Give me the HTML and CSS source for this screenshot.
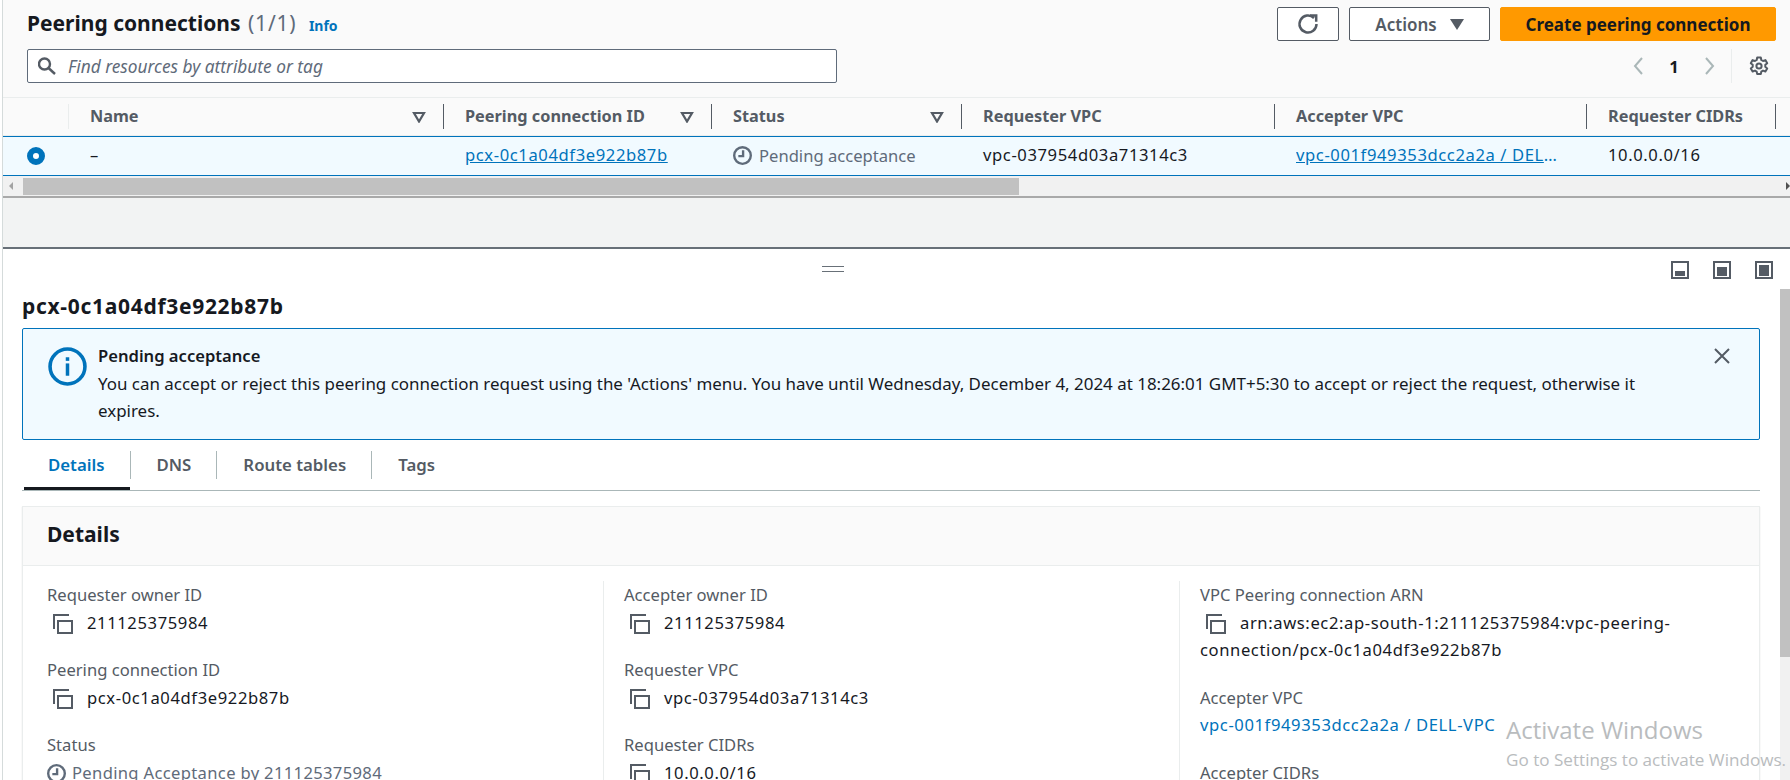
FILE: index.html
```html
<!DOCTYPE html>
<html lang="en">
<head>
    <meta charset="UTF-8">
    <title>Peering connections</title>
    <link rel="stylesheet" href="styles.css">
</head>
<body>
    <svg class="sprites" width="0" height="0">
        <symbol id="i-copy" viewBox="0 0 20 20">
            <path d="M1 15V1h15" fill="none" stroke="currentColor" stroke-width="2"/>
            <rect x="5" y="7" width="14" height="12" fill="none" stroke="currentColor" stroke-width="2"/>
        </symbol>
        <symbol id="i-clock" viewBox="0 0 16 16">
            <circle cx="8" cy="8" r="7" fill="none" stroke="currentColor" stroke-width="2"/>
            <path d="M8.500 3.500v5H4.500" fill="none" stroke="currentColor" stroke-width="2"/>
        </symbol>
        <symbol id="i-filter" viewBox="0 0 14 12">
            <path d="M2 2h10L7 10.500z" fill="none" stroke="currentColor" stroke-width="2.200"/>
        </symbol>
    </svg>

    <div class="app">
        <section class="list-panel">
            <div class="list-top">
                <div class="list-left">
                    <h1 class="list-title">Peering connections <span class="count">(1/1)</span> <a class="info">Info</a></h1>
                    <div class="search">
                        <svg class="search-icon" viewBox="0 0 18 18"><circle cx="6.500" cy="7" r="5.500" fill="none" stroke="currentColor" stroke-width="2.400"/><path d="M10.500 11l6.500 6" stroke="currentColor" stroke-width="2.400"/></svg>
                        <span class="search-text">Find resources by attribute or tag</span>
                    </div>
                </div>
                <div class="list-right">
                    <div class="btn-row">
                        <button class="btn btn-icon">
                            <svg width="22" height="22" viewBox="0 0 22 22"><path d="M17 5A8.500 8.500 0 1 0 19.500 11" fill="none" stroke="currentColor" stroke-width="2.500"/><path d="M13 2.500h6.200v6.200" fill="none" stroke="currentColor" stroke-width="2.500"/></svg>
                        </button>
                        <button class="btn btn-actions">Actions <span class="caret"></span></button>
                        <button class="btn btn-primary">Create peering connection</button>
                    </div>
                    <div class="pager">
                        <svg class="pager-arrow" viewBox="0 0 12 20"><path d="M10 2L3 10l7 8" fill="none" stroke="currentColor" stroke-width="2"/></svg>
                        <span class="pager-num">1</span>
                        <svg class="pager-arrow" viewBox="0 0 12 20"><path d="M2 2l7 8-7 8" fill="none" stroke="currentColor" stroke-width="2"/></svg>
                        <span class="pager-gear">
                            <svg width="20" height="20" viewBox="0 0 20 20"><path d="M8.200 1.500h3.600l.5 2.500 1.700 1 2.400-.9 1.800 3.100-1.900 1.600v2l1.900 1.600-1.800 3.100-2.400-.9-1.700 1-.5 2.500H8.200l-.5-2.500-1.700-1-2.400.9-1.800-3.100 1.900-1.600v-2L1.800 7.200l1.800-3.100 2.400.9 1.700-1z" fill="none" stroke="currentColor" stroke-width="2" stroke-linejoin="round"/><circle cx="10" cy="10" r="2.600" fill="none" stroke="currentColor" stroke-width="2"/></svg>
                        </span>
                    </div>
                </div>
            </div>

            <div class="t-row t-head">
                <div class="th th-select"></div>
                <div class="th th-soft">Name<svg class="filter"><use href="#i-filter"/></svg></div>
                <div class="th">Peering connection ID<svg class="filter"><use href="#i-filter"/></svg></div>
                <div class="th">Status<svg class="filter"><use href="#i-filter"/></svg></div>
                <div class="th">Requester VPC</div>
                <div class="th">Accepter VPC</div>
                <div class="th th-end">Requester CIDRs</div>
            </div>
            <div class="t-row t-selected">
                <div class="td td-radio"><span class="radio"></span></div>
                <div class="td">–</div>
                <div class="td"><a class="link id">pcx-0c1a04df3e922b87b</a></div>
                <div class="td td-status"><svg class="clock"><use href="#i-clock"/></svg>Pending acceptance</div>
                <div class="td id">vpc-037954d03a71314c3</div>
                <div class="td"><a class="link link-cut id">vpc-001f949353dcc2a2a / DELL-VPC</a></div>
                <div class="td id">10.0.0.0/16</div>
            </div>
            <div class="h-scroll">
                <span class="arrow-left"></span>
                <div class="h-thumb"></div>
                <span class="arrow-right"></span>
            </div>
            <div class="list-empty"></div>
        </section>

        <section class="split-panel">
            <div class="split-bar">
                <span class="handle"></span>
                <div class="view-icons">
                    <svg class="view-icon"><rect x="1" y="1" width="16" height="16" fill="none" stroke="currentColor" stroke-width="2"/><rect x="4" y="10" width="10" height="5" fill="currentColor"/></svg>
                    <svg class="view-icon"><rect x="1" y="1" width="16" height="16" fill="none" stroke="currentColor" stroke-width="2"/><rect x="4" y="6" width="10" height="9" fill="currentColor"/></svg>
                    <svg class="view-icon"><rect x="1" y="1" width="16" height="16" fill="none" stroke="currentColor" stroke-width="2"/><rect x="4" y="4" width="10" height="11" fill="currentColor"/></svg>
                </div>
            </div>

            <div class="detail">
                <h2 class="detail-title">pcx-0c1a04df3e922b87b</h2>

                <div class="alert">
                    <svg class="alert-icon" viewBox="0 0 38 38"><circle cx="19" cy="19" r="17" fill="none" stroke="currentColor" stroke-width="3.500"/><rect x="17.300" y="16" width="3.400" height="12" fill="currentColor"/><rect x="17.300" y="10" width="3.400" height="3.500" fill="currentColor"/></svg>
                    <div class="alert-body">
                        <div class="alert-title">Pending acceptance</div>
                        <div class="alert-text">You can accept or reject this peering connection request using the 'Actions' menu. You have until Wednesday, December 4, 2024 at 18:26:01 GMT+5:30 to accept or reject the request, otherwise it expires.</div>
                    </div>
                    <svg class="alert-close" viewBox="0 0 18 18"><path d="M2 2l14 14M16 2L2 16" stroke="currentColor" stroke-width="2"/></svg>
                </div>

                <div class="tabs">
                    <div class="tab tab-active">Details</div>
                    <div class="tab">DNS</div>
                    <div class="tab">Route tables</div>
                    <div class="tab tab-last">Tags</div>
                </div>

                <div class="card">
                    <div class="card-head">Details</div>
                    <div class="card-cols">
                        <div class="col">
                            <div class="field">
                                <div class="label">Requester owner ID</div>
                                <div class="value id"><svg class="copy"><use href="#i-copy"/></svg>211125375984</div>
                            </div>
                            <div class="field">
                                <div class="label">Peering connection ID</div>
                                <div class="value id"><svg class="copy"><use href="#i-copy"/></svg>pcx-0c1a04df3e922b87b</div>
                            </div>
                            <div class="field">
                                <div class="label">Status</div>
                                <div class="value value-status"><svg class="clock"><use href="#i-clock"/></svg>Pending Acceptance by 211125375984</div>
                            </div>
                        </div>
                        <div class="col">
                            <div class="field">
                                <div class="label">Accepter owner ID</div>
                                <div class="value id"><svg class="copy"><use href="#i-copy"/></svg>211125375984</div>
                            </div>
                            <div class="field">
                                <div class="label">Requester VPC</div>
                                <div class="value id"><svg class="copy"><use href="#i-copy"/></svg>vpc-037954d03a71314c3</div>
                            </div>
                            <div class="field">
                                <div class="label">Requester CIDRs</div>
                                <div class="value id"><svg class="copy"><use href="#i-copy"/></svg>10.0.0.0/16</div>
                            </div>
                        </div>
                        <div class="col">
                            <div class="field">
                                <div class="label">VPC Peering connection ARN</div>
                                <div class="value value-wrap id"><svg class="copy"><use href="#i-copy"/></svg>arn:aws:ec2:ap-south-1:211125375984:vpc-peering-connection/pcx-0c1a04df3e922b87b</div>
                            </div>
                            <div class="field">
                                <div class="label">Accepter VPC</div>
                                <div class="value id"><a class="link-plain">vpc-001f949353dcc2a2a / DELL-VPC</a></div>
                            </div>
                            <div class="field">
                                <div class="label">Accepter CIDRs</div>
                            </div>
                        </div>
                    </div>
                </div>
            </div>
            <div class="v-scroll"><div class="v-thumb"></div></div>
        </section>
    </div>

    <div class="watermark">
        <div class="wm-title">Activate Windows</div>
        <div class="wm-sub">Go to Settings to activate Windows.</div>
    </div>
</body>
</html>
```

FILE: styles.css
```css
* {
    box-sizing: border-box;
}
html, body {
    margin: 0;
    height: 780px;
    overflow: hidden;
}
body {
    font-family: "Noto Sans", sans-serif;
    font-size: 16.600px;
    color: #16191f;
    background-color: white;
    position: relative;
}
.sprites {
    position: absolute;
}
.app {
    margin-left: 2px;
    border-left: 1px solid #d5dbdb;
    height: 780px;
}
/* ids and numbers run wider than the letters in the original */
.id {
    letter-spacing: 0.6px;
}

/* top list */
.list-panel {
    background-color: #fafafa;
}
.list-top {
    display: flex;
    justify-content: space-between;
    height: 98px;
    padding: 7px 14px 0 24px;
    border-bottom: 1px solid #eaeded;
}
.list-left {
    width: 810px;
}
.list-title {
    margin: 0;
    font-size: 21px;
    line-height: 32px;
    height: 42px;
    font-weight: 700;
    color: #16191f;
}
.count {
    font-weight: 400;
    color: #5f6b7a;
    letter-spacing: 0.8px;
    margin-left: 2px;
}
.info {
    font-size: 14px;
    color: #0073bb;
    margin-left: 7px;
}
.search {
    display: flex;
    align-items: center;
    height: 34px;
    background-color: white;
    border: 1px solid #5f6b7a;
    border-radius: 2px;
    padding-left: 10px;
}
.search-icon {
    width: 18px;
    height: 18px;
    color: #545b64;
    margin-right: 12px;
}
.search-text {
    font-style: italic;
    font-size: 17.300px;
    color: #5f6b7a;
}
.list-right {
    width: 499px;
}
.btn-row {
    display: flex;
    gap: 10px;
}
.btn {
    display: inline-flex;
    align-items: center;
    justify-content: center;
    height: 34px;
    font-family: inherit;
    font-size: 17px;
    font-weight: 600;
    border: 1px solid #545b64;
    border-radius: 2px;
    background-color: white;
    color: #545b64;
    padding: 0;
}
.btn-icon {
    width: 62px;
}
.btn-actions {
    width: 141px;
    gap: 13px;
}
.btn-primary {
    width: 276px;
    background-color: #ff9900;
    border-color: #ff9900;
    color: #16191f;
    font-weight: 700;
}
.caret {
    width: 0;
    height: 0;
    border-left: 7px solid transparent;
    border-right: 7px solid transparent;
    border-top: 11px solid #545b64;
}
.pager {
    display: flex;
    align-items: center;
    justify-content: flex-end;
    height: 34px;
    margin-top: 8px;
}
.pager-arrow {
    width: 12px;
    height: 20px;
    color: #aab7b8;
}
.pager-num {
    font-weight: 700;
    width: 60px;
    text-align: center;
}
.pager-gear {
    display: flex;
    align-items: center;
    height: 34px;
    margin-left: 15px;
    padding-left: 17px;
    padding-right: 7px;
    border-left: 1px solid #eaeded;
    color: #545b64;
}

/* table */
.t-row {
    display: grid;
    grid-template-columns: 66px 375px 268px 250px 313px 312px 189px 14px;
}
.t-head {
    height: 38px;
    padding-top: 6px;
    border-bottom: 1px solid #eaeded;
}
.th {
    position: relative;
    height: 25px;
    padding-left: 21px;
    border-right: 1px solid #545b64;
    font-weight: 700;
    font-size: 16.300px;
    line-height: 25px;
    color: #545b64;
}
.th-select {
    border-right: 1px solid #eaeded;
}
.th-end {
    grid-column: 7;
}
.filter {
    position: absolute;
    right: 17px;
    top: 7px;
    width: 14px;
    height: 12px;
    color: #545b64;
}
.t-selected {
    height: 40px;
    background-color: #f1faff;
    border-top: 1px solid #0073bb;
    border-bottom: 1px solid #0073bb;
    line-height: 35px;
}
.td {
    padding-left: 21px;
    white-space: nowrap;
}
.td-radio {
    display: flex;
    align-items: center;
}
.radio {
    width: 18px;
    height: 18px;
    border-radius: 50%;
    background-color: white;
    border: 6px solid #0073bb;
    margin-left: 3px;
}
.link {
    color: #0073bb;
    text-decoration: underline;
}
.link-cut {
    display: block;
    width: 270px;
    overflow: hidden;
    text-overflow: ellipsis;
}
.td-status {
    color: #5f6b7a;
    display: flex;
    align-items: center;
    padding-bottom: 2px;
}
.clock {
    width: 19px;
    height: 19px;
    margin-right: 7px;
    color: #5f6b7a;
}
.h-scroll {
    display: flex;
    align-items: center;
    height: 22px;
    background-color: #f1f1f1;
    border-bottom: 2px solid #a9a9a9;
}
.h-thumb {
    width: 996px;
    height: 17px;
    margin-left: 10px;
    background-color: #c1c1c1;
}
.arrow-left, .arrow-right {
    width: 0;
    height: 0;
    border-top: 4px solid transparent;
    border-bottom: 4px solid transparent;
}
.arrow-left {
    margin-left: 6px;
    border-right: 4px solid #a3a3a3;
}
.arrow-right {
    margin-left: auto;
    border-left: 4px solid #505050;
}
.list-empty {
    height: 51px;
    background-color: #f2f3f3;
    border-bottom: 2px solid #687078;
}

/* split panel */
.split-panel {
    position: relative;
}
.split-bar {
    display: flex;
    align-items: center;
    justify-content: center;
    height: 40px;
    padding-right: 128px;
}
.handle {
    width: 22px;
    height: 6px;
    border-top: 1px solid #687078;
    border-bottom: 1px solid #687078;
}
.view-icons {
    position: absolute;
    right: 17px;
    top: 12px;
    display: flex;
    gap: 24px;
    color: #545b64;
}
.view-icon {
    width: 18px;
    height: 18px;
}
.detail {
    padding: 0 30px 0 19px;
}
.detail-title {
    margin: 0 0 7px;
    height: 32px;
    font-size: 21px;
    line-height: 35px;
    font-weight: 700;
    letter-spacing: 0.7px;
}
.alert {
    display: flex;
    position: relative;
    height: 112px;
    padding: 13px 100px 0 25px;
    background-color: #f1faff;
    border: 1px solid #0073bb;
    border-radius: 2px;
    line-height: 27.500px;
}
.alert-icon {
    flex: none;
    width: 39px;
    height: 39px;
    margin: 5px 11px 0 0;
    color: #0073bb;
}
.alert-title {
    font-weight: 600;
}
.alert-text {
    font-size: 16.950px;
}
.alert-close {
    position: absolute;
    right: 28px;
    top: 18px;
    width: 18px;
    height: 18px;
    color: #545b64;
}
.tabs {
    display: flex;
    height: 51px;
    border-bottom: 1px solid #aab7b8;
    margin-bottom: 15px;
}
.tab {
    height: 28px;
    margin-top: 11px;
    padding: 0 25px 0 26px;
    border-right: 1px solid #aab7b8;
    font-weight: 600;
    font-size: 16.800px;
    line-height: 28px;
    color: #545b64;
}
.tab-last {
    border-right: none;
}
.tab-active {
    position: relative;
    color: #0073bb;
}
.tab-active::after {
    content: "";
    position: absolute;
    left: 2px;
    right: 0;
    top: 36px;
    height: 3px;
    background-color: #16191f;
}
.card {
    border: 1px solid #eaeded;
    box-shadow: 0 1px 1px rgba(0,0,0,0.15);
}
.card-head {
    height: 59px;
    padding: 9px 24px 0;
    background-color: #fafafa;
    border-bottom: 1px solid #eaeded;
    font-size: 21px;
    line-height: 36px;
    font-weight: 700;
}
.card-cols {
    display: grid;
    grid-template-columns: 580px 576px 1fr;
    padding-top: 15px;
}
.col {
    padding: 0 20px 0 20px;
    border-left: 1px solid #eaeded;
}
.col:first-child {
    padding-left: 24px;
    border-left: none;
}
.field {
    margin-bottom: 20px;
    line-height: 27.500px;
}
.label {
    color: #545b64;
}
.value {
    white-space: nowrap;
}
.value-wrap {
    white-space: normal;
}
.value-status {
    color: #5f6b7a;
    letter-spacing: 0.33px;
}
.copy {
    width: 20px;
    height: 20px;
    margin: 0 14px 0 6px;
    color: #545b64;
    vertical-align: -5px;
}
.value-status .clock {
    vertical-align: -4px;
    margin-right: 6px;
}
.link-plain {
    color: #0073bb;
}
.v-scroll {
    position: absolute;
    right: 0;
    top: 40px;
    width: 10px;
    height: 492px;
    background-color: #f1f1f1;
}
.v-thumb {
    height: 368px;
    background-color: #c1c1c1;
}

/* windows watermark, sits over the page */
.watermark {
    position: absolute;
    left: 1506px;
    top: 714px;
    color: #b9bcbe;
    white-space: nowrap;
    font-family: "Open Sans", sans-serif;
}
.wm-title {
    font-size: 24px;
    line-height: 32px;
}
.wm-sub {
    font-size: 17.100px;
    line-height: 28px;
}
```
